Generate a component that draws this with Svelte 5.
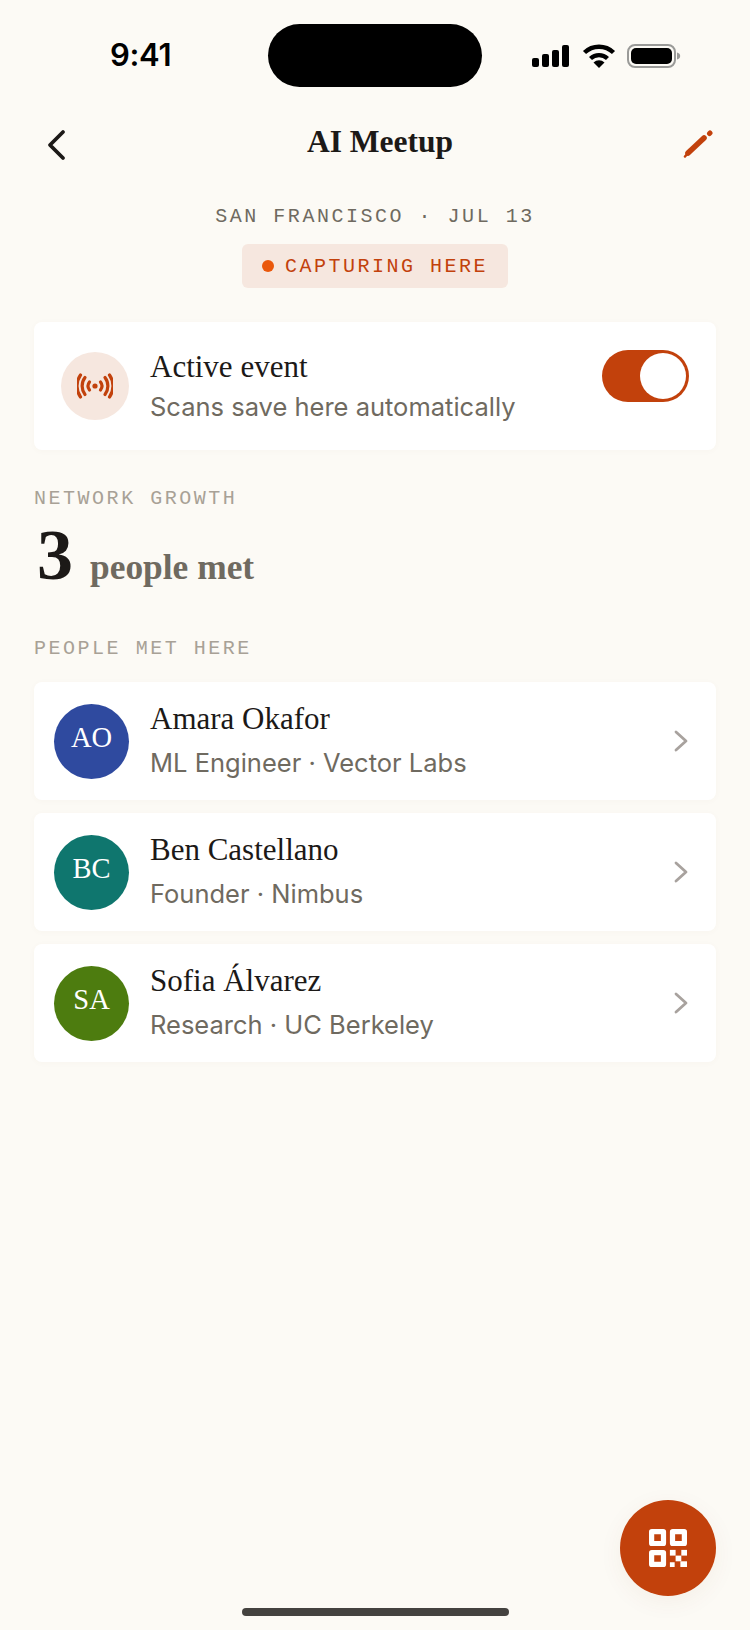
<script>
  const people = [
    { initials: 'AO', name: 'Amara Okafor', role: 'ML Engineer · Vector Labs', color: '#2f4a9f' },
    { initials: 'BC', name: 'Ben Castellano', role: 'Founder · Nimbus', color: '#0f766e' },
    { initials: 'SA', name: 'Sofia Álvarez', role: 'Research · UC Berkeley', color: '#4d7c0f' }
  ];
</script>

<div class="screen">
  <div class="status">
    <span class="time">9:41</span>
    <div class="island"></div>
    <div class="status-icons">
      <svg width="38" height="24" viewBox="0 0 38 24" fill="#000">
        <rect x="0" y="14" width="7" height="9" rx="2"/>
        <rect x="10" y="10" width="7" height="13" rx="2"/>
        <rect x="20" y="6" width="7" height="17" rx="2"/>
        <rect x="30" y="1" width="7" height="22" rx="2"/>
      </svg>
      <svg class="wifi" width="34" height="26" viewBox="0 0 34 26" fill="none" stroke="#000" stroke-width="4.4">
        <path d="M2.5 9.5a21 21 0 0 1 29 0"/>
        <path d="M8.5 15.5a12.5 12.5 0 0 1 17 0"/>
        <path d="M17 25l-5.5-5.5a8 8 0 0 1 11 0z" fill="#000" stroke="none"/>
      </svg>
      <svg class="battery" width="54" height="26" viewBox="0 0 54 26">
        <rect x="1" y="2" width="47" height="22" rx="7" fill="none" stroke="#9a9a98" stroke-width="2"/>
        <rect x="4" y="5" width="41" height="16" rx="5" fill="#000"/>
        <path d="M50 9.5c2 .5 3.2 1.8 3.2 3.5s-1.200 3-3.200 3.500z" fill="#9a9a98"/>
      </svg>
    </div>
  </div>

  <header class="nav">
    <svg class="back" width="22" height="32" viewBox="0 0 22 32" fill="none" stroke="#1c1917" stroke-width="3.800" stroke-linecap="round" stroke-linejoin="round">
      <path d="M17 3L4 16l13 13"/>
    </svg>
    <h1>AI Meetup</h1>
    <svg class="edit" width="30" height="28" viewBox="0 0 30 28" fill="none" stroke="#c2410c" stroke-linecap="round">
      <path d="M5 23L21 8" stroke-width="5.600"/>
      <path d="M2 26.500L5 23" stroke-width="2.500"/>
      <path d="M26.500 3.500l.5-.5" stroke-width="5"/>
    </svg>
  </header>

  <div class="meta">SAN FRANCISCO · JUL 13</div>
  <div class="pill-row">
    <div class="pill"><span class="dot"></span>CAPTURING HERE</div>
  </div>

  <section class="card active">
    <div class="signal">
      <svg width="36" height="26" viewBox="0 0 36 26" fill="none" stroke="#c2410c" stroke-width="3.200" stroke-linecap="round">
        <circle cx="18" cy="13" r="2.600" fill="#c2410c" stroke="none"/>
        <path d="M12.500 9a6.500 6.500 0 0 0 0 8"/>
        <path d="M23.500 9a6.500 6.500 0 0 1 0 8"/>
        <path d="M8 4.500a14 14 0 0 0 0 17"/>
        <path d="M28 4.500a14 14 0 0 1 0 17"/>
        <path d="M3.500 2a19 19 0 0 0 0 22"/>
        <path d="M32.500 2a19 19 0 0 1 0 22"/>
      </svg>
    </div>
    <div class="info">
      <div class="name">Active event</div>
      <div class="sub">Scans save here automatically</div>
    </div>
    <div class="toggle"><span class="knob"></span></div>
  </section>

  <div class="label growth-label">NETWORK GROWTH</div>
  <div class="growth">
    <span class="count">3</span>
    <span class="count-text">people met</span>
  </div>

  <div class="label people-label">PEOPLE MET HERE</div>
  <div class="list">
    {#each people as person}
      <div class="card row">
        <div class="avatar" style="background: {person.color}"><span>{person.initials}</span></div>
        <div class="info">
          <div class="name">{person.name}</div>
          <div class="sub">{person.role}</div>
        </div>
        <svg class="chevron" width="16" height="24" viewBox="0 0 16 24" fill="none" stroke="#a8a29e" stroke-width="2.800" stroke-linecap="round" stroke-linejoin="round">
          <path d="M3 3l10 9-10 9"/>
        </svg>
      </div>
    {/each}
  </div>

  <button class="fab" aria-label="Scan QR code">
    <svg width="38" height="38" viewBox="0 0 40 40" fill="#fff" fill-rule="evenodd">
      <path d="M3 0h12a3 3 0 0 1 3 3v12a3 3 0 0 1-3 3H3a3 3 0 0 1-3-3V3a3 3 0 0 1 3-3zm2.500 5.500v7h7v-7z"/>
      <path d="M25 0h12a3 3 0 0 1 3 3v12a3 3 0 0 1-3 3H25a3 3 0 0 1-3-3V3a3 3 0 0 1 3-3zm2.500 5.500v7h7v-7z"/>
      <path d="M3 22h12a3 3 0 0 1 3 3v12a3 3 0 0 1-3 3H3a3 3 0 0 1-3-3V25a3 3 0 0 1 3-3zm2.500 5.500v7h7v-7z"/>
      <rect x="22" y="22" width="6" height="6"/>
      <rect x="34" y="22" width="6" height="6"/>
      <rect x="28" y="28" width="6" height="6"/>
      <rect x="22" y="35" width="5" height="5"/>
      <rect x="33" y="34" width="7" height="6"/>
    </svg>
  </button>
  <div class="home-bar"></div>
</div>

<style>
  :global(body) {
    margin: 0;
    background: #fcfaf5;
  }

  .screen {
    position: relative;
    width: 750px;
    height: 1630px;
    background: #fcfaf5;
    overflow: hidden;
    font-family: Inter, "Liberation Sans", sans-serif;
    color: #1c1917;
  }

  .status {
    height: 63px;
    padding-top: 24px;
    display: grid;
    grid-template-columns: 268px 214px 268px;
    align-items: center;
  }

  .time {
    justify-self: start;
    margin-left: 110px;
    margin-top: -2px;
    font-size: 31px;
    font-weight: 600;
    color: #000;
    letter-spacing: -0.3px;
  }

  .island {
    height: 63px;
    background: #000;
    border-radius: 32px;
  }

  .status-icons {
    display: flex;
    align-items: center;
    gap: 9px;
    margin-left: 50px;
  }

  .wifi {
    margin-left: 3px;
  }

  .battery {
    margin-left: 2px;
  }

  .nav {
    display: flex;
    align-items: center;
    justify-content: space-between;
    margin-top: 20px;
    padding: 0 36px 0 46px;
    height: 70px;
    position: relative;
  }

  .back {
    margin-top: 6px;
  }

  .edit {
    margin-top: 4px;
    margin-right: 1px;
  }

  h1 {
    margin: 0;
    position: absolute;
    left: 0;
    right: 0;
    text-align: center;
    font-family: "Liberation Serif", serif;
    font-size: 31.500px;
    font-weight: 700;
    line-height: 70px;
    padding-left: 10px;
  }

  .meta {
    margin-top: 27px;
    text-align: center;
    font-family: "Liberation Mono", monospace;
    font-size: 20px;
    line-height: 26px;
    letter-spacing: 2.520px;
    color: #6f6a60;
  }

  .pill-row {
    display: flex;
    justify-content: center;
    margin-top: 14px;
  }

  .pill {
    height: 44px;
    width: 266px;
    box-sizing: border-box;
    padding-left: 20px;
    display: flex;
    align-items: center;
    gap: 11px;
    background: #f6e7df;
    border-radius: 6px;
    font-family: "Liberation Mono", monospace;
    font-size: 20px;
    letter-spacing: 2.500px;
    color: #c2410c;
  }

  .dot {
    width: 12px;
    height: 12px;
    border-radius: 50%;
    background: #ea580c;
  }

  .card {
    background: #fff;
    border-radius: 8px;
    box-shadow: 0 1px 6px rgba(120, 100, 70, 0.03);
    display: flex;
    align-items: center;
  }

  .active {
    margin: 34px 34px 0;
    height: 128px;
    padding: 0 27px;
    box-sizing: border-box;
  }

  .signal {
    width: 68px;
    height: 68px;
    flex: none;
    border-radius: 50%;
    background: #f6e7df;
    display: flex;
    align-items: center;
    justify-content: center;
  }

  .info {
    flex: 1;
    margin-left: 21px;
  }

  .name {
    font-family: "Liberation Serif", serif;
    font-size: 31px;
    line-height: 36px;
    color: #1c1917;
  }

  .sub {
    margin-top: 9px;
    font-size: 25.500px;
    line-height: 34px;
    color: #6f6a60;
  }

  .row .info {
    margin-top: -2px;
  }

  .active .info {
    margin-top: 0;
  }

  .active .sub {
    margin-top: 5px;
  }

  .toggle {
    width: 87px;
    height: 52px;
    margin-top: -20px;
    border-radius: 26px;
    background: #c2410c;
    display: flex;
    justify-content: flex-end;
    align-items: center;
    padding-right: 3px;
    box-sizing: border-box;
  }

  .knob {
    width: 46px;
    height: 46px;
    border-radius: 50%;
    background: #fff;
  }

  .label {
    margin-left: 34px;
    font-family: "Liberation Mono", monospace;
    font-size: 20px;
    line-height: 26px;
    letter-spacing: 2.520px;
    color: #a8a196;
  }

  .growth-label {
    margin-top: 36px;
  }

  .growth {
    margin: 8px 0 0 37px;
    height: 70px;
    display: flex;
    align-items: baseline;
    font-family: "Liberation Serif", serif;
    font-weight: 700;
  }

  .count {
    font-size: 72px;
    line-height: 70px;
    color: #1c1917;
  }

  .count-text {
    margin-left: 17px;
    font-size: 35.400px;
    color: #6f6a60;
  }

  .people-label {
    margin-top: 46px;
  }

  .list {
    margin: 20px 34px 0;
    display: flex;
    flex-direction: column;
    gap: 13px;
  }

  .row {
    height: 118px;
    padding: 0 27px 0 20px;
  }

  .avatar {
    width: 75px;
    height: 75px;
    flex: none;
    border-radius: 50%;
    display: flex;
    align-items: center;
    justify-content: center;
    font-family: "Liberation Serif", serif;
    font-size: 28.500px;
    color: #fff;
  }

  .avatar span {
    margin-top: -7px;
  }

  .fab {
    position: absolute;
    left: 620px;
    top: 1500px;
    width: 96px;
    height: 96px;
    padding: 0;
    border: none;
    border-radius: 50%;
    background: #c2410c;
    display: flex;
    align-items: center;
    justify-content: center;
    box-shadow: 0 6px 24px rgba(120, 60, 20, 0.06);
  }

  .home-bar {
    position: absolute;
    left: 242px;
    top: 1608px;
    width: 267px;
    height: 8px;
    border-radius: 4px;
    background: #44423f;
  }
</style>
